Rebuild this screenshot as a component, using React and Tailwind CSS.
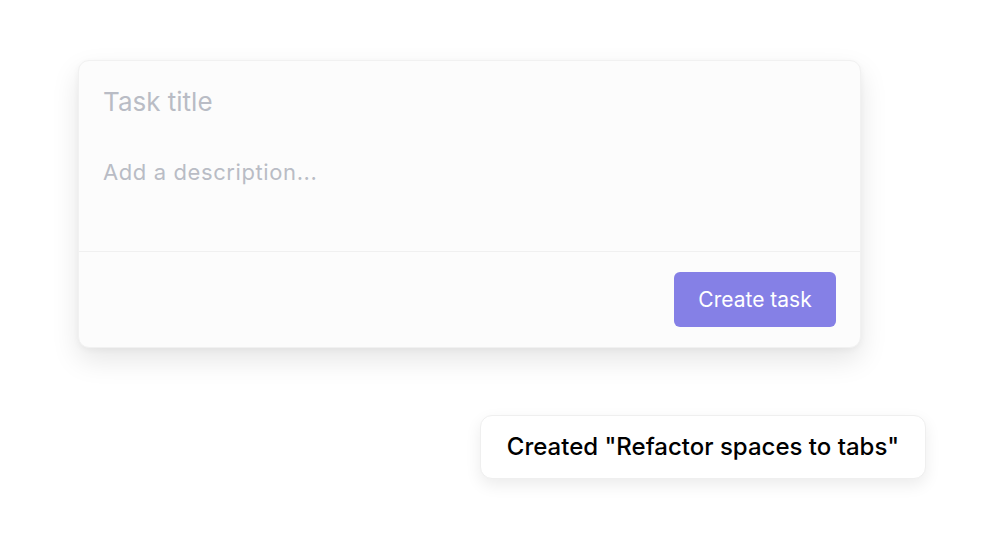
export default function App() {
  return (
    <div
      className="min-h-[560px] w-[1000px] bg-white"
      style={{ fontFamily: "Inter, 'Noto Sans', sans-serif" }}
    >
      <div className="flex flex-col pt-[60px] pl-[78px]">
        {/* TASK CARD */}
        <div className="w-[783px] rounded-[11px] border border-[#f1f1f1] bg-[#fcfcfc] shadow-[0_12px_28px_rgba(0,0,0,0.10),0_2px_6px_rgba(0,0,0,0.04)]">
          <div className="px-6 pt-[24px] pb-[64px]">
            <div className="text-[26px] leading-[34px] text-[#b9bcc5]">Task title</div>
            <div className="mt-[38px] text-[22px] leading-[30px] tracking-[0.6px] text-[#b9bcc5]">Add a description...</div>
          </div>
          <div className="flex justify-end border-t border-[#f0f0f0] px-6 py-5">
            <button className="h-[55px] w-[162px] rounded-[6px] bg-[#8580e6] text-[21px] text-white">
              Create task
            </button>
          </div>
        </div>

        {/* TOAST */}
        <div className="mt-[67px] ml-[402px] flex h-[64px] w-[446px] items-center justify-center rounded-[12px] border border-[#efefef] bg-white shadow-[0_6px_16px_rgba(0,0,0,0.08)]">
          <span className="text-[24px] font-medium text-black">Created "Refactor spaces to tabs"</span>
        </div>
      </div>
    </div>
  );
}
